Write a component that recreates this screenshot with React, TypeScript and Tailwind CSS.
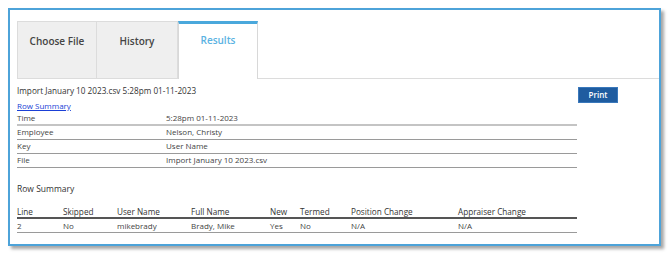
import React from "react";

const font = { fontFamily: '"Open Sans", "Noto Sans", sans-serif' };

export default function App() {
  const info = [
    ["Time", "5:28pm 01-11-2023"],
    ["Employee", "Nelson, Christy"],
    ["Key", "User Name"],
    ["File", "Import January 10 2023.csv"],
  ];
  const cols = [
    { h: "Line", v: "2", w: "w-[46px]" },
    { h: "Skipped", v: "No", w: "w-[54px]" },
    { h: "User Name", v: "mikebrady", w: "w-[74px]" },
    { h: "Full Name", v: "Brady, Mike", w: "w-[79px]" },
    { h: "New", v: "Yes", w: "w-[30px]" },
    { h: "Termed", v: "No", w: "w-[51px]" },
    { h: "Position Change", v: "N/A", w: "w-[107px]" },
    { h: "Appraiser Change", v: "N/A", w: "flex-1" },
  ];
  return (
    <div className="w-[670px] h-[256px] bg-white pt-[8px] pl-[8px]" style={font}>
      <div className="w-[653px] h-[238px] border-2 border-[#4da3d9] bg-white shadow-[3px_3px_3px_rgba(0,0,0,0.35)] pt-[11px] pl-[7px] text-[#444]">
        <div className="flex h-[58px]">
          <div className="w-[80px] h-full bg-[#efefef] border border-[#dcdcdc] flex justify-center pt-[12px] text-[10px] leading-[14px] font-semibold text-[#444]">
            Choose File
          </div>
          <div className="w-[81px] h-full bg-[#efefef] border border-l-0 border-[#dcdcdc] flex justify-center pt-[12px] text-[10px] leading-[14px] font-semibold text-[#444]">
            History
          </div>
          <div className="w-[80px] h-full bg-white border-t-[3px] border-t-[#4aa8dc] border-x border-x-[#d8d8d8] flex justify-center pt-[9px] text-[10px] leading-[14px] font-semibold text-[#5ab2e2]">
            Results
          </div>
          <div className="flex-1 border-b border-[#dcdcdc]" />
        </div>
        <div className="flex">
          <div className="w-[560px]">
            <div className="h-[15px] mt-[4px] text-[8.2px] leading-[15px] text-[#333]">
              Import January 10 2023.csv 5:28pm 01-11-2023
            </div>
            <div className="h-[13px] mt-[1px] text-[8px] leading-[13px] text-[#1a3fd6] underline">
              Row Summary
            </div>
            {info.map(([k, v], i) => (
              <div
                key={k}
                className={`flex h-[14px] text-[8px] leading-[12px] ${
                  i === 0 ? "border-b-2 border-[#c4c4c4]" : "border-b border-[#9a9a9a]"
                }`}
              >
                <div className="w-[149px]">{k}</div>
                <div>{v}</div>
              </div>
            ))}
            <div className="mt-[14px] h-[14px] text-[8.5px] leading-[14px] text-[#333]">
              Row Summary
            </div>
            <div className="mt-[9px] flex h-[14px] text-[8.2px] leading-[13px] text-[#333] border-b-2 border-[#555]">
              {cols.map((c) => (
                <div key={c.h} className={c.w}>
                  {c.h}
                </div>
              ))}
            </div>
            <div className="flex h-[14px] text-[8px] leading-[14px] border-b border-[#9a9a9a]">
              {cols.map((c) => (
                <div key={c.h} className={c.w}>
                  {c.v}
                </div>
              ))}
            </div>
          </div>
          <div className="ml-[1px] mt-[8px]">
            <div className="w-[40px] h-[16px] bg-[#1f5ca0] border border-[#3a78bb] text-white text-[8px] leading-[14px] text-center font-semibold">
              Print
            </div>
          </div>
        </div>
      </div>
    </div>
  );
}
